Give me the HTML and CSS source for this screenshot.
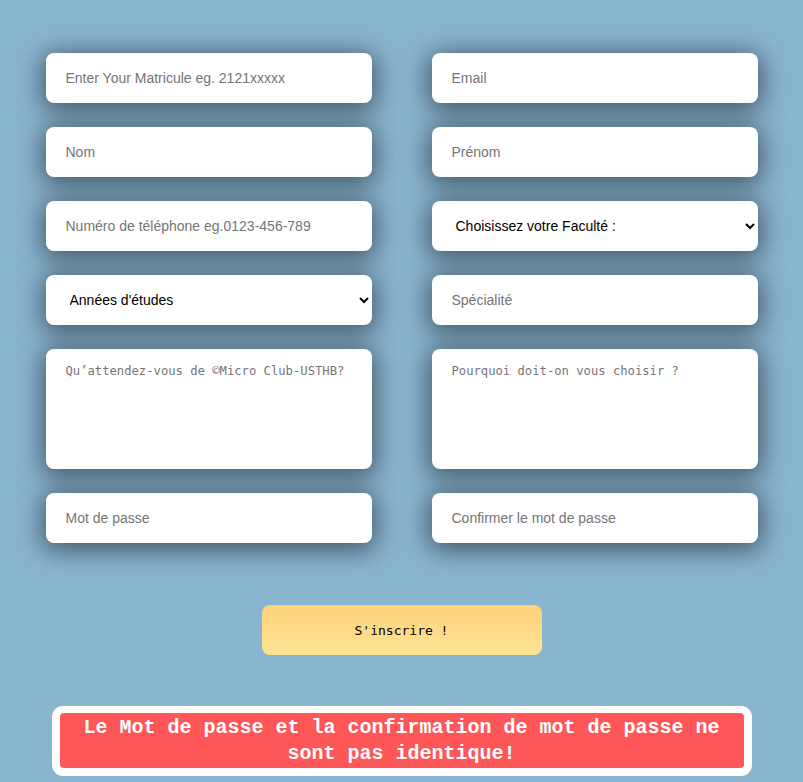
FILE: index.html
```html
<!DOCTYPE html>
<html lang="fr">
<head>
<meta charset="utf-8">
<title>Inscription</title>
<link rel="stylesheet" href="styles.css">
</head>
<body>
<form class="form">
  <div class="grid">
    <input class="field" type="text" placeholder="Enter Your Matricule eg. 2121xxxxx">
    <input class="field" type="email" placeholder="Email">
    <input class="field" type="text" placeholder="Nom">
    <input class="field" type="text" placeholder="Prénom">
    <input class="field" type="tel" placeholder="Numéro de téléphone eg.0123-456-789">
    <select class="field select"><option>Choisissez votre Faculté :</option></select>
    <select class="field select"><option>Années d'études</option></select>
    <input class="field" type="text" placeholder="Spécialité">
    <textarea class="field area" placeholder="Qu’attendez-vous de ©Micro Club-USTHB?"></textarea>
    <textarea class="field area" placeholder="Pourquoi doit-on vous choisir ?"></textarea>
    <input class="field" type="password" placeholder="Mot de passe">
    <input class="field" type="password" placeholder="Confirmer le mot de passe">
  </div>
  <div class="actions">
    <button type="button" class="submit">S'inscrire !</button>
  </div>
  <div class="alert-wrap">
    <div class="alert">Le Mot de passe et la confirmation de mot de passe ne sont pas identique!</div>
  </div>
</form>
</body>
</html>
```
FILE: styles.css
```css
html, body {
  margin: 0;
  padding: 0;
  background: #8ab5d1;
  overflow: hidden;
}
body {
  font-family: "Liberation Sans", Arial, sans-serif;
}
.form {
  width: 712px;
  margin: 0 auto;
  padding-top: 53px;
}
.grid {
  display: grid;
  grid-template-columns: 326px 326px;
  column-gap: 60px;
  row-gap: 24px;
}
.field {
  box-sizing: border-box;
  height: 50px;
  width: 100%;
  border: none;
  border-radius: 8px;
  background: #fff;
  padding: 0 20px;
  font-family: "Liberation Sans", Arial, sans-serif;
  font-size: 14px;
  color: #000;
  box-shadow: 0 4px 26px 4px rgba(0, 0, 0, 0.5);
  outline: none;
}
.field::placeholder {
  color: #757575;
}
.select {
  padding: 0 4px 0 20px;
  color: #000;
}
.area {
  height: 120px;
  padding: 14px 20px;
  resize: none;
  font-family: "DejaVu Sans Mono", "Liberation Mono", monospace;
  font-size: 12.2px;
  line-height: 16px;
}
.actions {
  display: flex;
  justify-content: center;
  padding-top: 62px;
}
.submit {
  width: 280px;
  height: 50px;
  border: none;
  border-radius: 8px;
  background: linear-gradient(#fdd27c, #fde392);
  font-family: "DejaVu Sans Mono", "Liberation Mono", monospace;
  font-size: 13px;
  color: #000;
}
.alert-wrap {
  margin: 51px auto 0;
  width: 700px;
  box-sizing: border-box;
  background: #fff;
  border-radius: 11px;
  padding: 7px 8px 8px;
}
.alert {
  background: #ff5757;
  border-radius: 4px;
  color: #fff;
  text-align: center;
  font-family: "Liberation Mono", monospace;
  font-weight: bold;
  font-size: 20px;
  line-height: 26px;
  padding: 2px 0 1px;
}
```
